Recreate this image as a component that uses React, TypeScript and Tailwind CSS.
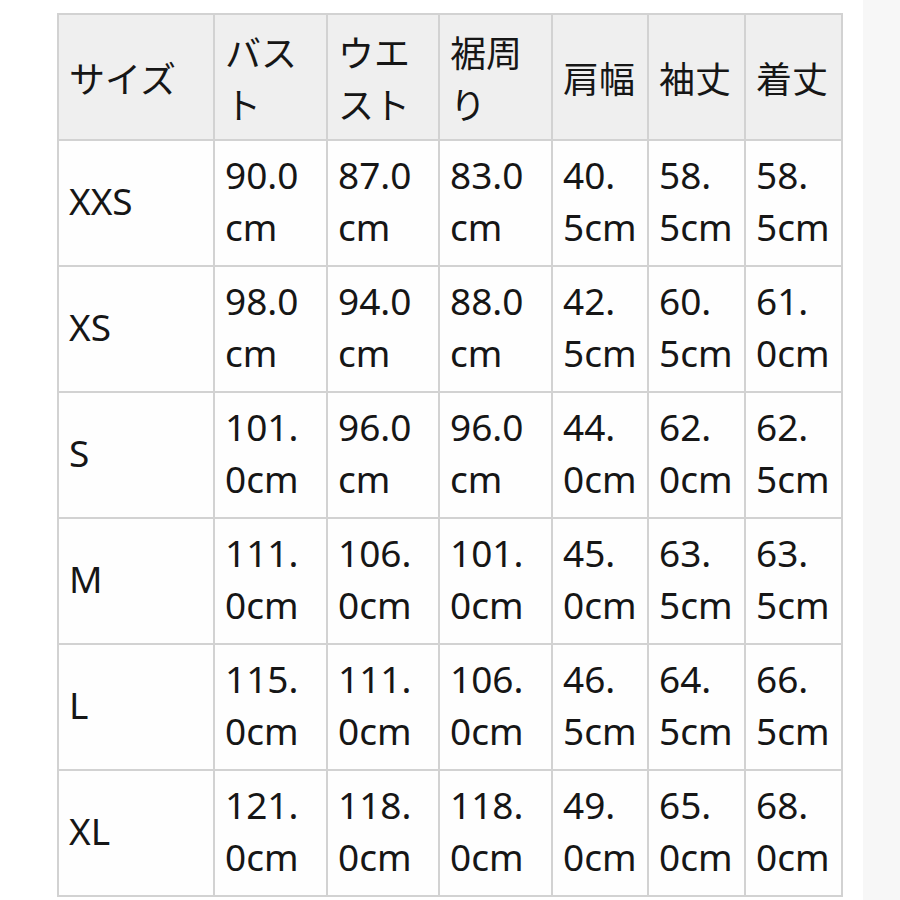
import React from "react";

const headers: string[][] = [
  ["サイズ"],
  ["バス", "ト"],
  ["ウエ", "スト"],
  ["裾周", "り"],
  ["肩幅"],
  ["袖丈"],
  ["着丈"],
];

const rows: { size: string; vals: string[][] }[] = [
  { size: "XXS", vals: [["90.0", "cm"], ["87.0", "cm"], ["83.0", "cm"], ["40.", "5cm"], ["58.", "5cm"], ["58.", "5cm"]] },
  { size: "XS", vals: [["98.0", "cm"], ["94.0", "cm"], ["88.0", "cm"], ["42.", "5cm"], ["60.", "5cm"], ["61.", "0cm"]] },
  { size: "S", vals: [["101.", "0cm"], ["96.0", "cm"], ["96.0", "cm"], ["44.", "0cm"], ["62.", "0cm"], ["62.", "5cm"]] },
  { size: "M", vals: [["111.", "0cm"], ["106.", "0cm"], ["101.", "0cm"], ["45.", "0cm"], ["63.", "5cm"], ["63.", "5cm"]] },
  { size: "L", vals: [["115.", "0cm"], ["111.", "0cm"], ["106.", "0cm"], ["46.", "5cm"], ["64.", "5cm"], ["66.", "5cm"]] },
  { size: "XL", vals: [["121.", "0cm"], ["118.", "0cm"], ["118.", "0cm"], ["49.", "0cm"], ["65.", "0cm"], ["68.", "0cm"]] },
];

function Cell({ lines, header }: { lines: string[]; header?: boolean }) {
  return (
    <div
      className={
        "h-[124px] flex flex-col justify-center pl-[10px] pr-1 whitespace-nowrap overflow-hidden " +
        (header
          ? "bg-[#efefef] text-[36px]"
          : "bg-[#fefefe] text-[37px] pb-[4px]")
      }
      style={
        header
          ? { fontFamily: '"Noto Sans CJK JP", "Noto Sans", sans-serif' }
          : { fontFamily: '"Noto Sans", "Noto Sans CJK JP", sans-serif' }
      }
    >
      {lines.map((l, i) => (
        <div key={i} className="leading-[52px]">
          {l}
        </div>
      ))}
    </div>
  );
}

export default function App() {
  return (
    <div className="w-[900px] h-[900px] overflow-hidden flex bg-white">
      <div className="w-[863px] pt-[13px] pl-[57px]">
        <div className="grid grid-cols-[154px_111px_110px_111px_94px_95px_95px] gap-[2px] p-[2px] bg-[#d2d2d2] w-[786px] text-[#161616]">
          {headers.map((h, i) => (
            <Cell key={"h" + i} lines={h} header />
          ))}
          {rows.map((r) => (
            <React.Fragment key={r.size}>
              <Cell lines={[r.size]} />
              {r.vals.map((v, j) => (
                <Cell key={r.size + j} lines={v} />
              ))}
            </React.Fragment>
          ))}
        </div>
      </div>
      <div className="flex-1 h-full bg-[#f7f7f7]" />
    </div>
  );
}
